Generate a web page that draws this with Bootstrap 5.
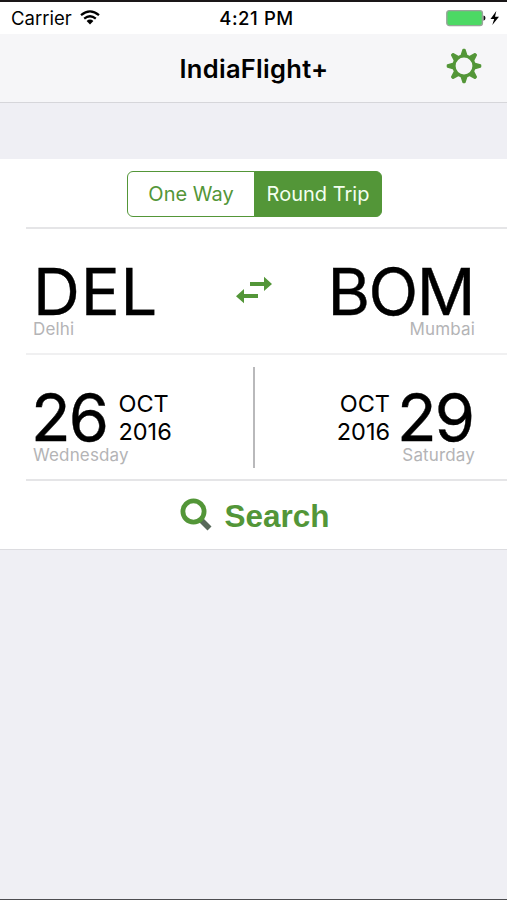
<!DOCTYPE html>
<html lang="en">
<head>
<meta charset="utf-8">
<meta name="viewport" content="width=device-width, initial-scale=1">
<title>IndiaFlight+</title>
<link href="https://cdn.jsdelivr.net/npm/bootstrap@5.3.0/dist/css/bootstrap.min.css" rel="stylesheet">
<style>
:root { --leaf: #539638; }
body { background: #efeff4; color: #000; font-family: Inter, "Liberation Sans", sans-serif; height: 900px; overflow: hidden; border-top: 2px solid #1a1718; border-bottom: 1px solid #4c4c50; }
.status { height: 32px; font-size: 18.5px; line-height: 32px; }
.carrier { padding-left: 11px; gap: 8px; }
.carrier svg { margin-top: -2px; }
.clock { font-weight: 500; font-size: 18.5px; letter-spacing: .6px; padding-left: 6px; line-height: 33px; }
.power { padding-right: 8px; }
.titlebar { height: 69px; background: #f6f6f8; border-bottom: 1px solid #d6d6da; }
.titlebar h1 { font-size: 25.5px; font-weight: 600; line-height: 69px; letter-spacing: .3px; padding-left: 1px; }
.titlebar .side { width: 61px; padding-top: 14px; }
.panel { margin-top: 56px; background: #fff; border-bottom: 1px solid #dcdce0; }
.line { border-bottom: 2px solid #e5e5e7; margin-left: 26px; }
.line.faint { border-bottom-color: #f0f0f1; }
.trip { height: 69.5px; padding: 11.5px 0 0 101px; }
.trip .btn-group { width: 255px; height: 46px; }
.trip .btn { --bs-btn-color: var(--leaf); --bs-btn-border-color: var(--leaf); --bs-btn-active-bg: var(--leaf); --bs-btn-active-border-color: var(--leaf); --bs-btn-active-color: #f4fff0; --bs-btn-border-width: 1.5px; --bs-btn-border-radius: 6px; font-size: 20px; line-height: 44px; flex: 1 1 0; white-space: nowrap; }
.leg { height: 126px; padding: 33.5px 32px 0 7px; }
.leg > * { flex: 1 1 0; }
.leg > .mid { flex: 0 0 36px; display: flex; justify-content: center; margin-left: -1px; }
.big { font-size: 65px; line-height: 60px; -webkit-text-stroke: .4px #000; }
.del { letter-spacing: .8px; }
.bom { letter-spacing: -1.5px; margin-right: 1px; }
.num { letter-spacing: -2px; margin-left: -2px; }
.num.last { margin-left: 7px; margin-right: 2px; }
.sub { font-size: 17px; line-height: 14px; color: #b4b4b6; letter-spacing: .15px; }
.month { font-size: 23.5px; line-height: 28.5px; padding-top: 1.5px; height: 60px; }
.out { margin-left: 11.5px; }
.swap { margin-top: 14px; }
.divider { width: 2px; height: 101px; background: #b9b9bb; margin-top: -21px; }
.search { height: 68px; color: var(--leaf); font: bold 31.5px/68px "Liberation Sans", Arial, sans-serif; gap: 11px; padding-left: 3px; padding-top: 3px; }
.search svg { margin-top: -3px; }
</style>
<script src="https://cdn.jsdelivr.net/npm/bootstrap@5.3.0/dist/js/bootstrap.bundle.min.js"></script>
</head>
<body>
<div class="status bg-white d-flex">
  <div class="carrier d-flex align-items-center col-4"><span>Carrier</span>
    <svg width="20" height="15" viewBox="0 0 20 15" fill="none" stroke="#000" stroke-width="2.2"><path d="M1 5.2Q10-2.6 19 5.2M4.2 8.7Q10 3.8 15.8 8.7"/><path d="M10 14.4 6.6 11Q10 8.2 13.4 11Z" fill="#000" stroke="none"/></svg>
  </div>
  <div class="clock col-4 text-center">4:21 PM</div>
  <div class="power d-flex align-items-center justify-content-end col-4">
    <svg width="53" height="18" viewBox="0 0 53 18"><rect x=".8" y="1.6" width="35.6" height="15" rx="2.5" fill="#4cd964" stroke="#98a59a" stroke-width="1.4"/><path d="M37.5 6.5q2 .4 2 2.6t-2 2.6z" fill="#111"/><path d="M50.3 2 44.5 10h3.7l-1.9 6L53 7.7h-4z" fill="#000"/></svg>
  </div>
</div>
<header class="titlebar d-flex justify-content-between">
  <div class="side"></div>
  <h1 class="m-0 text-center">IndiaFlight+</h1>
  <div class="side">
    <svg class="d-block" width="36" height="36" viewBox="-18 -18 36 36" fill="none" stroke="#539638" stroke-linecap="round" stroke-linejoin="round"><circle r="10" stroke-width="3.2"/><g fill="#539638" stroke-width="2"><path id="t" d="M-2.4-11-.7-16.3H.7L2.4-11Z"/><use href="#t" transform="rotate(45)"/><use href="#t" transform="rotate(90)"/><use href="#t" transform="rotate(135)"/><use href="#t" transform="rotate(180)"/><use href="#t" transform="rotate(225)"/><use href="#t" transform="rotate(270)"/><use href="#t" transform="rotate(315)"/></g></svg>
  </div>
</header>
<main class="panel">
  <div class="line trip">
    <div class="btn-group"><button class="btn p-0">One Way</button><button class="btn p-0 active">Round Trip</button></div>
  </div>
  <div class="line faint leg d-flex">
    <div><div class="big del">DEL</div><div class="sub">Delhi</div></div>
    <div class="mid"><svg class="swap" width="36" height="28" viewBox="0 0 36 28" fill="#539638"><path d="M14 6H28V.8L36 8 28 15V10H14ZM22 18H8V13L0 20.2 8 27.2V22H22Z"/></svg></div>
    <div class="text-end"><div class="big bom">BOM</div><div class="sub">Mumbai</div></div>
  </div>
  <div class="line leg d-flex">
    <div><div class="d-flex"><div class="big num">26</div><div class="month out">OCT<br>2016</div></div><div class="sub">Wednesday</div></div>
    <div class="mid"><div class="divider"></div></div>
    <div class="text-end"><div class="d-flex justify-content-end"><div class="month">OCT<br>2016</div><div class="big num last">29</div></div><div class="sub">Saturday</div></div>
  </div>
  <div class="search d-flex justify-content-center align-items-center">
    <svg width="33" height="33" viewBox="0 0 33 33" fill="none"><path d="M20.5 21.5 29.5 30.5" stroke="#58695a" stroke-width="5.6"/><circle cx="13.5" cy="13.5" r="10.6" stroke="#539638" stroke-width="4.8"/></svg>
    <span>Search</span>
  </div>
</main>
</body>
</html>
